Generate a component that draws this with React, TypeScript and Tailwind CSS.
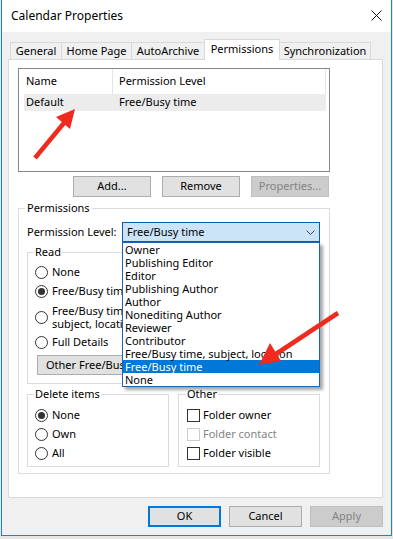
import React from "react";

const levels = [
    "Owner",
    "Publishing Editor",
    "Editor",
    "Publishing Author",
    "Author",
    "Nonediting Author",
    "Reviewer",
    "Contributor",
    "Free/Busy time, subject, location",
    "Free/Busy time",
    "None",
];

const Radio: React.FC<{ checked?: boolean }> = ({ checked }) => (
    <span className="flex items-center justify-center w-[13px] h-[13px] shrink-0 rounded-full border border-[#333] bg-white">
        {checked && <span className="w-[7px] h-[7px] rounded-full bg-[#333]" />}
    </span>
);

const Check: React.FC<{ disabled?: boolean }> = ({ disabled }) => (
    <span
        className={
            disabled
                ? "w-[13px] h-[13px] shrink-0 border border-[#cccccc] bg-white"
                : "w-[13px] h-[13px] shrink-0 border border-[#333] bg-white"
        }
    />
);

const Button: React.FC<{ label: string; disabled?: boolean; primary?: boolean; className?: string }> = ({
    label,
    disabled,
    primary,
    className = "",
}) => {
    let look = "bg-[#e1e1e1] border border-[#adadad] text-black";
    if (disabled) look = "bg-[#cccccc] border border-[#bfbfbf] text-[#838383]";
    if (primary) look = "bg-[#e1e1e1] border-2 border-[#0078d7] text-black";
    return (
        <div className={`flex items-center justify-center h-[21px] ${look} ${className}`}>{label}</div>
    );
};

const Legend: React.FC<{ children: React.ReactNode }> = ({ children }) => (
    <legend className="px-[1px] -ml-px leading-[16px]">{children}</legend>
);

const Arrows: React.FC = () => (
    <svg className="absolute inset-0 z-30 pointer-events-none" width={393} height={539}>
        <line x1={35} y1={158} x2={64} y2={123} stroke="#ef2b1f" strokeWidth={4.5} />
        <polygon points="75,109 70,129 56,117" fill="#ef2b1f" />
        <line x1={338} y1={313} x2={276} y2={354} stroke="#ef2b1f" strokeWidth={4.5} />
        <polygon points="259,365 270,343 281,361" fill="#ef2b1f" />
    </svg>
);

export default function App() {
    return (
        <div className="relative w-[393px] h-[539px] overflow-hidden bg-[#e6e6e6] text-[11px] text-black font-['Segoe_UI','Noto_Sans',sans-serif]">
            <div className="ml-px w-[391px] h-[536px] flex flex-col border-x border-b border-[#1883d7] bg-[#f0f0f0]">
                {/* title bar */}
                <div className="flex items-center justify-between h-[32px] bg-white pl-[9px] pr-[9px]">
                    <span className="text-[12px]">Calendar Properties</span>
                    <svg width={11} height={11} viewBox="0 0 11 11" className="mt-[-1px]">
                        <path d="M0.5 0.5 L10.5 10.5 M10.5 0.5 L0.5 10.5" stroke="#111" strokeWidth={1} />
                    </svg>
                </div>

                <div className="flex flex-col px-[6px] pr-[8px] pt-[7px]">
                    {/* tabs */}
                    <div className="flex items-end h-[20px] pl-[2px]">
                        <div className="flex items-center justify-center w-[51px] h-[17px] border-l border-t border-[#d9d9d9]">General</div>
                        <div className="flex items-center justify-center w-[70px] h-[17px] border-l border-t border-[#d9d9d9]">Home Page</div>
                        <div className="flex items-center justify-center w-[73px] h-[17px] border-l border-t border-[#d9d9d9]">AutoArchive</div>
                        <div className="relative z-10 flex items-center justify-center w-[76px] h-[21px] -mb-px -mr-px pb-[1px] bg-white border-x border-t border-[#d9d9d9]">
                            Permissions
                        </div>
                        <div className="flex items-center justify-center w-[92px] h-[17px] border-x border-t border-[#d9d9d9]">Synchronization</div>
                    </div>

                    {/* panel */}
                    <div className="flex flex-col h-[439px] bg-white border border-[#d9d9d9] pl-[9px] pt-[8px]">
                        {/* list */}
                        <div className="w-[312px] h-[104px] border border-[#828790] pl-[5px]">
                            <div className="flex h-[25px] items-center">
                                <div className="w-[89px] h-full flex items-center pl-[2px] border-r border-[#e5e5e5]">Name</div>
                                <div className="w-[213px] h-full flex items-center pl-[6px] border-r border-[#e5e5e5]">Permission Level</div>
                            </div>
                            <div className="flex w-[302px] h-[17px] items-center bg-[#ececec]">
                                <div className="w-[89px] pl-[2px]">Default</div>
                                <div className="pl-[6px]">Free/Busy time</div>
                            </div>
                        </div>

                        <div className="flex justify-end gap-[11px] w-[311px] mt-[4px]">
                            <Button label="Add..." className="w-[78px]" />
                            <Button label="Remove" className="w-[78px]" />
                            <Button label="Properties..." disabled className="w-[78px]" />
                        </div>

                        {/* permissions group */}
                        <fieldset className="w-[312px] h-[274px] mt-[3px] border border-[#dcdcdc] pl-[8px] pr-[9px]">
                            <legend className="px-[2px] -ml-[2px] leading-[16px]">Permissions</legend>
                            <div className="flex items-center mt-[6px]">
                                <span className="w-[95px] whitespace-nowrap">Permission Level:</span>
                                <div className="relative z-20 w-[198px]">
                                    <div className="flex items-center justify-between h-[20px] bg-[#cce4f7] border border-[#0a5ea8] pl-[4px] pr-[4px]">
                                        <span>Free/Busy time</span>
                                        <svg width={9} height={5} viewBox="0 0 9 5">
                                            <path d="M0.5 0.5 L4.5 4.5 L8.5 0.5" fill="none" stroke="#444" strokeWidth={1} />
                                        </svg>
                                    </div>
                                    <div className="absolute left-0 top-full w-[198px] bg-white border border-[#1766b7] shadow-[3px_3px_3px_rgba(0,0,0,0.35)]">
                                        {levels.map((l) => (
                                            <div
                                                key={l}
                                                className={
                                                    l === "Free/Busy time"
                                                        ? "h-[13px] leading-[13px] pl-[2px] bg-[#0078d7] text-white whitespace-nowrap"
                                                        : "h-[13px] leading-[13px] pl-[2px] whitespace-nowrap"
                                                }
                                            >
                                                {l}
                                            </div>
                                        ))}
                                    </div>
                                </div>
                            </div>

                            <div className="flex gap-[9px] mt-[2px]">
                                <fieldset className="w-[142px] h-[140px] border border-[#dcdcdc] pl-[7px] pt-[3px] overflow-hidden">
                                    <Legend>Read</Legend>
                                    <div className="flex items-center gap-[4px] h-[19px]"><Radio /><span>None</span></div>
                                    <div className="flex items-center gap-[4px] h-[19px]"><Radio checked /><span className="whitespace-nowrap">Free/Busy time</span></div>
                                    <div className="flex items-center gap-[4px] h-[32px]">
                                        <Radio />
                                        <span className="leading-[13px] whitespace-nowrap">Free/Busy time,<br />subject, location</span>
                                    </div>
                                    <div className="flex items-center gap-[4px] h-[19px]"><Radio /><span>Full Details</span></div>
                                    <div className="flex items-center h-[20px] w-[121px] mt-[3px] ml-[2px] pl-[8px] bg-[#e1e1e1] border border-[#adadad] whitespace-nowrap">
                                        Other Free/Busy...
                                    </div>
                                </fieldset>
                                <fieldset className="w-[142px] h-[140px] border border-[#dcdcdc] pl-[8px]">
                                    <Legend>Write</Legend>
                                </fieldset>
                            </div>

                            <div className="flex gap-[9px] mt-[2px]">
                                <fieldset className="w-[142px] h-[81px] border border-[#dcdcdc] pl-[7px] pt-[4px]">
                                    <Legend>Delete items</Legend>
                                    <div className="flex items-center gap-[4px] h-[19px]"><Radio checked /><span>None</span></div>
                                    <div className="flex items-center gap-[4px] h-[19px]"><Radio /><span>Own</span></div>
                                    <div className="flex items-center gap-[4px] h-[19px]"><Radio /><span>All</span></div>
                                </fieldset>
                                <fieldset className="w-[142px] h-[81px] border border-[#dcdcdc] pl-[8px] pt-[4px]">
                                    <Legend>Other</Legend>
                                    <div className="flex items-center gap-[3px] h-[19px]"><Check /><span>Folder owner</span></div>
                                    <div className="flex items-center gap-[3px] h-[19px] text-[#838383]"><Check disabled /><span>Folder contact</span></div>
                                    <div className="flex items-center gap-[3px] h-[19px]"><Check /><span>Folder visible</span></div>
                                </fieldset>
                            </div>
                        </fieldset>
                    </div>

                    {/* dialog buttons */}
                    <div className="flex justify-end gap-[8px] mt-[8px]">
                        <Button label="OK" primary className="w-[73px]" />
                        <Button label="Cancel" className="w-[73px]" />
                        <Button label="Apply" disabled className="w-[73px]" />
                    </div>
                </div>
            </div>
            <Arrows />
        </div>
    );
}
